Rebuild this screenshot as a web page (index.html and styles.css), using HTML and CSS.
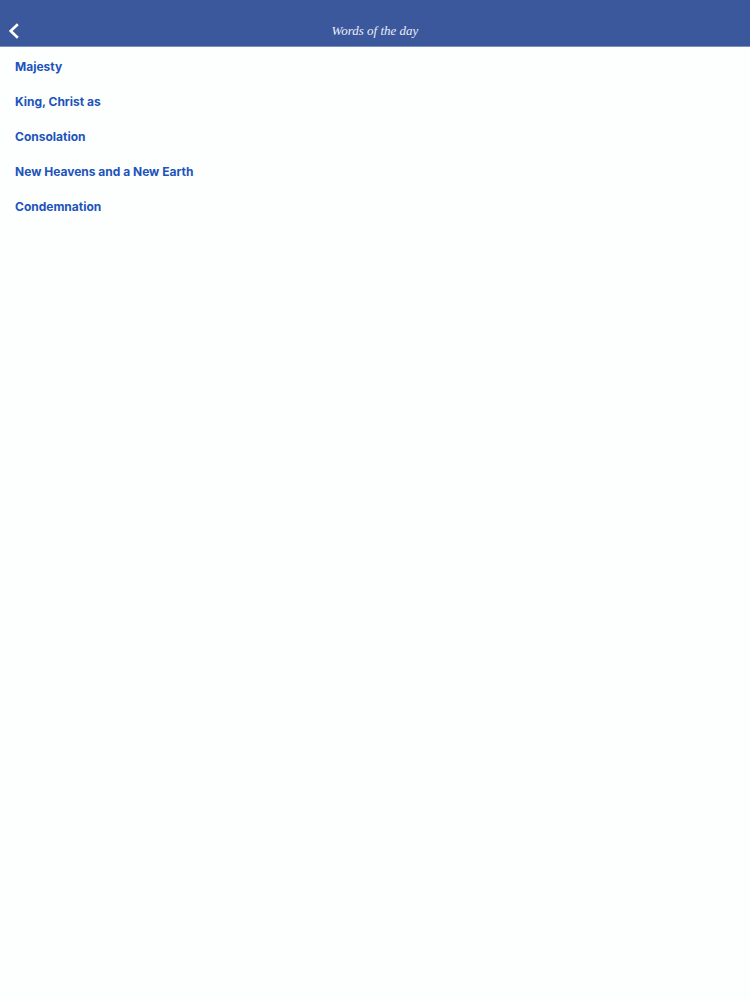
FILE: index.html
```
<!DOCTYPE html>
<html lang="en">
<head>
<meta charset="utf-8">
<meta name="viewport" content="width=device-width, initial-scale=1">
<title>Words of the day</title>
<link rel="stylesheet" href="styles.css">
</head>
<body>
<header class="bar">
  <button class="back" type="button" aria-label="Back">
    <svg class="back-icon" width="12" height="16" viewBox="0 0 12 16" aria-hidden="true"><path d="M9.8 1.2 2.7 8l7.1 6.8"/></svg>
  </button>
  <h1 class="title">Words of the day</h1>
</header>
<main>
  <ul class="words">
    <li><a class="word" href="#majesty">Majesty</a></li>
    <li><a class="word" href="#king">King, Christ as</a></li>
    <li><a class="word" href="#consolation">Consolation</a></li>
    <li><a class="word" href="#new-heavens">New Heavens and a New Earth</a></li>
    <li><a class="word" href="#condemnation">Condemnation</a></li>
  </ul>
</main>
</body>
</html>
```
FILE: styles.css
```
body {
  margin: 0;
  background: #fdfefe;
  font-family: Inter, "Liberation Sans", Arial, sans-serif;
}

.bar {
  display: grid;
  grid-template-columns: 32px 1fr 32px;
  align-items: center;
  padding-top: 15px;
  border-bottom: 1px solid #7b8fc0;
  background: #3c589c;
  color: #fff;
}

.back {
  display: flex;
  height: 31px;
  padding: 0 0 0 8px;
  align-items: center;
  border: 0;
  background: none;
  color: inherit;
}

.back-icon {
  fill: none;
  stroke: currentColor;
  stroke-width: 2.6;
}

.title {
  margin: 0;
  color: #e9eef8;
  font: italic 13px/31px "Liberation Serif", "Times New Roman", serif;
  text-align: center;
}

.words {
  margin: 0;
  padding: 2px 0 0;
  list-style: none;
}

.word {
  display: block;
  padding: 10px 15px;
  color: #1c54ba;
  font-size: 12px;
  font-weight: 700;
  line-height: 15px;
  text-decoration: none;
}
```
